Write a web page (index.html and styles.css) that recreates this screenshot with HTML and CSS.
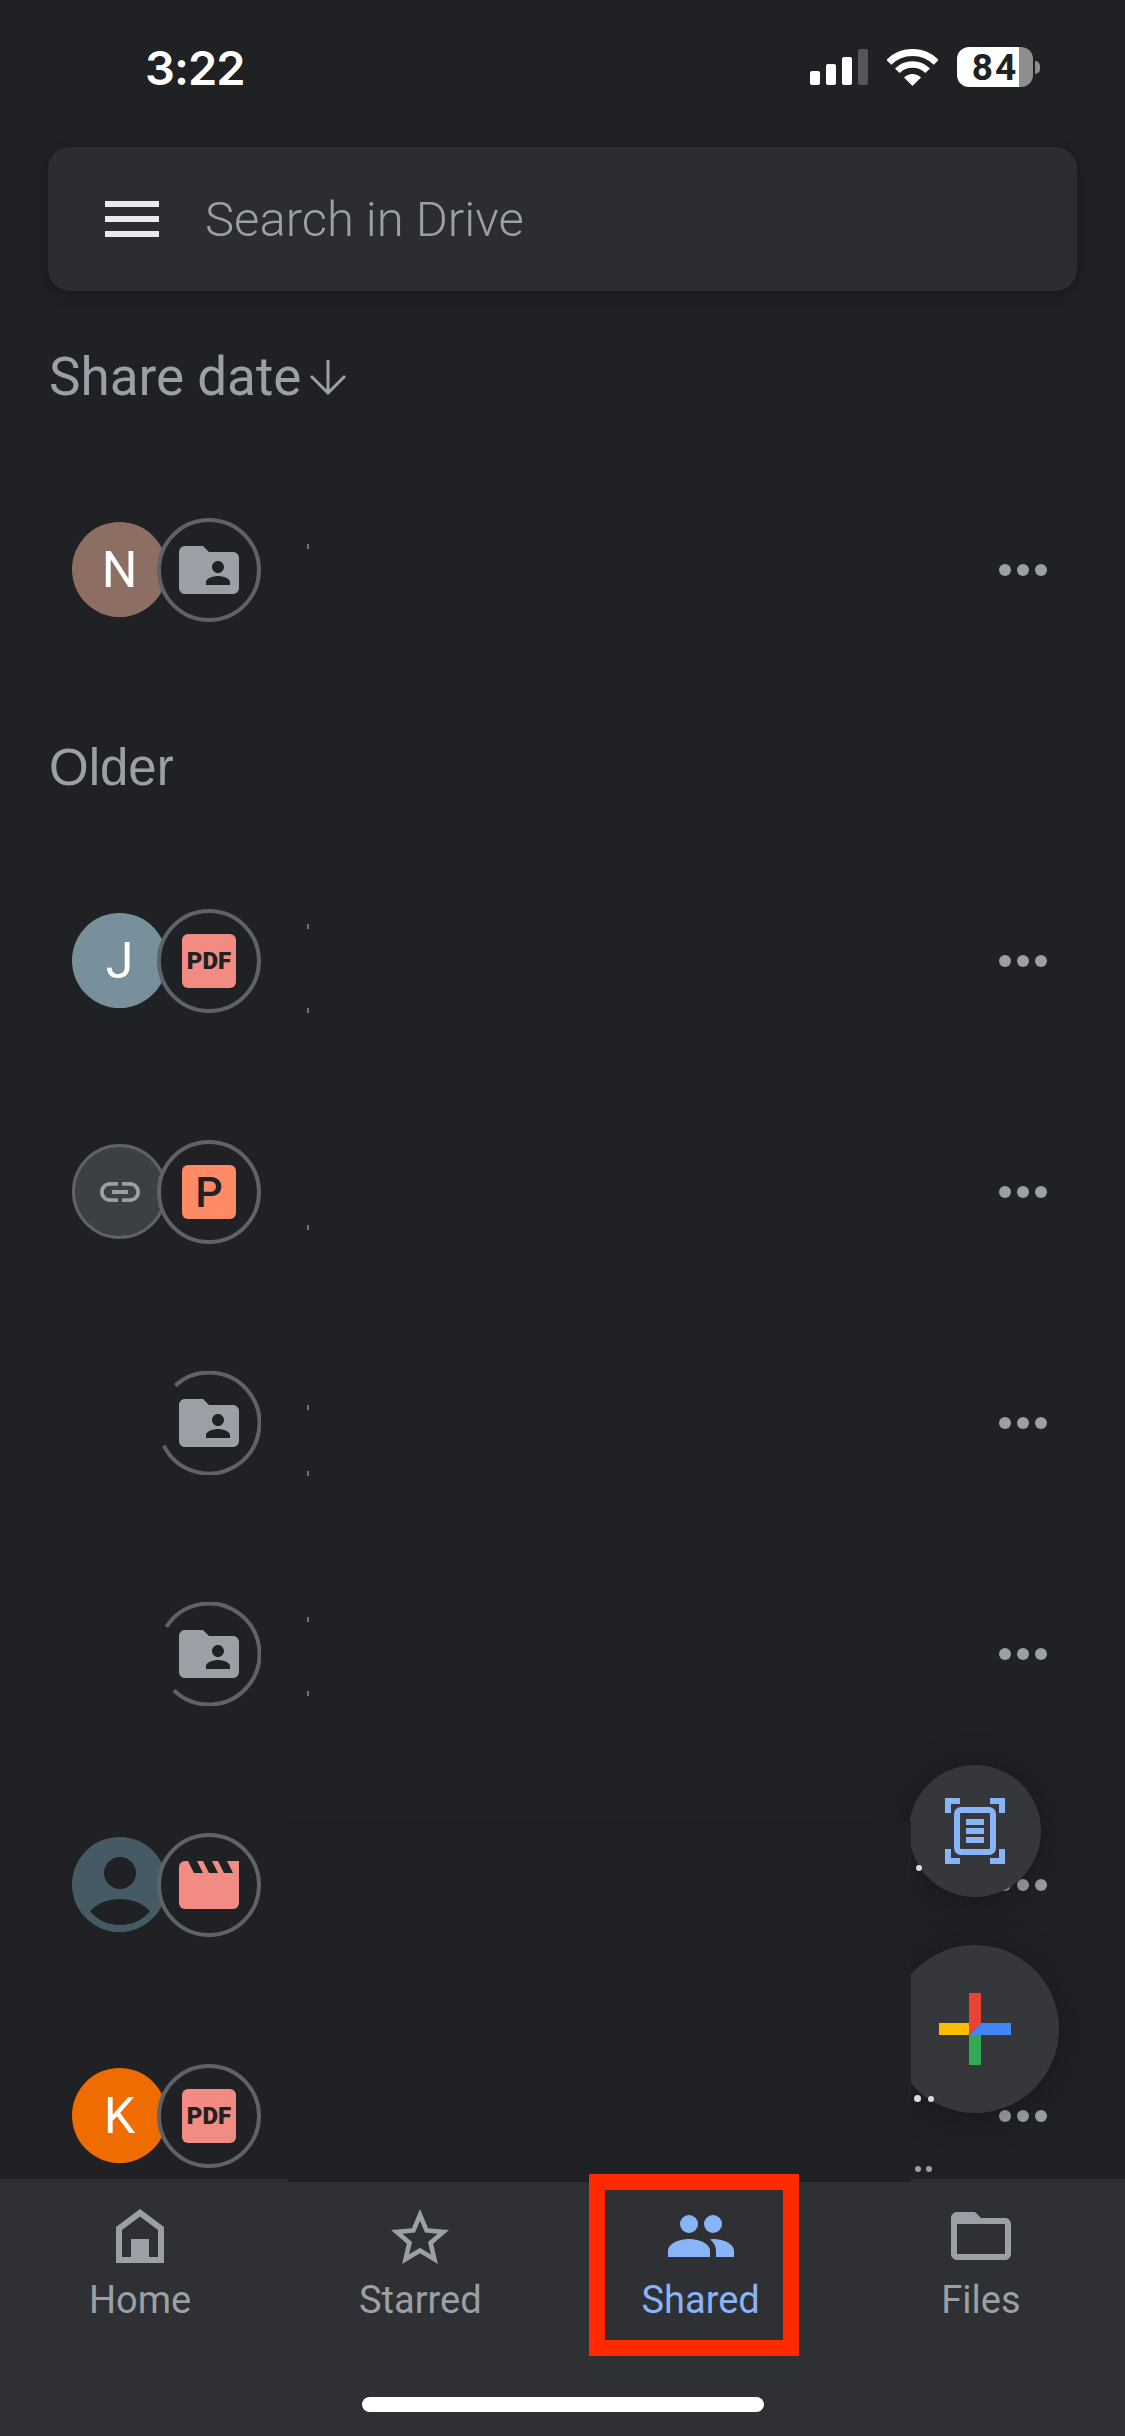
FILE: index.html
```html
<!DOCTYPE html>
<html lang="en">
<head>
	<meta charset="utf-8">
	<title>Drive - Shared</title>
	<link rel="stylesheet" href="styles.css">
</head>
<body>
<div class="app">

	<header class="statusbar">
		<span class="time">3:22</span>
		<div class="status-icons">
			<div class="signal"><i class="b1"></i><i class="b2"></i><i class="b3"></i><i class="b4"></i></div>
			<svg class="wifi" width="51" height="37" viewBox="0 0 51 37">
				<path d="M1.8 13.3A33.5 33.5 0 0 1 49.2 13.3" fill="none" stroke="#fff" stroke-width="7"/>
				<path d="M10.3 21.8A21.5 21.5 0 0 1 40.7 21.8" fill="none" stroke="#fff" stroke-width="6.5"/>
				<path d="M25.5 37L17 28.5A12 12 0 0 1 34 28.5z" fill="#fff"/>
			</svg>
			<div class="battery">84</div>
			<div class="battery-tip"></div>
		</div>
	</header>

	<div class="searchbar">
		<div class="burger"><i></i><i></i><i></i></div>
		<span class="search-text">Search in Drive</span>
	</div>

	<main class="list">
		<div class="sort-label">Share date<svg width="38" height="36" viewBox="0 0 38 36"><path d="M19 1v32M2 17l17 17 17-17" fill="none" stroke="#9aa0a6" stroke-width="3"/></svg></div>

		<div class="row">
			<div class="thumbs">
				<div class="avatar av-n">N</div>
				<div class="ring">
					<svg width="60" height="48" viewBox="2 4 20 16"><path fill="#9aa0a6" d="M20 6h-8l-2-2H4c-1.1 0-2 .9-2 2v12c0 1.1.9 2 2 2h16c1.1 0 2-.9 2-2V8c0-1.1-.9-2-2-2zm-5 3c1.1 0 2 .9 2 2s-.9 2-2 2-2-.9-2-2 .9-2 2-2zm4 8h-8v-1c0-1.33 2.67-2 4-2s4 .67 4 2v1z"/></svg>
				</div>
			</div>
			<i class="sliver s-a"></i>
			<div class="more"><i></i><i></i><i></i></div>
		</div>

		<div class="section-label">Older</div>

		<div class="row">
			<div class="thumbs">
				<div class="avatar av-j">J</div>
				<div class="ring"><div class="filetile pdf">PDF</div></div>
			</div>
			<i class="sliver s-b"></i><i class="sliver s-c"></i>
			<div class="more"><i></i><i></i><i></i></div>
		</div>

		<div class="row">
			<div class="thumbs">
				<div class="avatar av-link">
					<svg width="48" height="48" viewBox="0 0 24 24"><path fill="#9aa0a6" d="M3.9 12c0-1.71 1.39-3.1 3.1-3.1h4V7H7c-2.76 0-5 2.24-5 5s2.24 5 5 5h4v-1.9H7c-1.71 0-3.1-1.39-3.1-3.1zM8 13h8v-2H8v2zm9-6h-4v1.9h4c1.71 0 3.1 1.39 3.1 3.1s-1.39 3.1-3.1 3.1h-4V17h4c2.76 0 5-2.24 5-5s-2.24-5-5-5z"/></svg>
				</div>
				<div class="ring"><div class="filetile ppt">P</div></div>
			</div>
			<i class="sliver s-d"></i>
			<div class="more"><i></i><i></i><i></i></div>
		</div>

		<div class="row">
			<div class="thumbs">
				<div class="avatar-gap"></div>
				<div class="ring ring-open">
					<svg class="arc" width="104" height="104" viewBox="0 0 104 104"><path d="M18.3 14.4A50.5 50.5 0 1 1 6.8 74.6" fill="none" stroke="#5f6368" stroke-width="4"/></svg>
					<svg width="60" height="48" viewBox="2 4 20 16"><path fill="#9aa0a6" d="M20 6h-8l-2-2H4c-1.1 0-2 .9-2 2v12c0 1.1.9 2 2 2h16c1.1 0 2-.9 2-2V8c0-1.1-.9-2-2-2zm-5 3c1.1 0 2 .9 2 2s-.9 2-2 2-2-.9-2-2 .9-2 2-2zm4 8h-8v-1c0-1.33 2.67-2 4-2s4 .67 4 2v1z"/></svg>
				</div>
			</div>
			<i class="sliver s-e"></i><i class="sliver s-f"></i>
			<div class="more"><i></i><i></i><i></i></div>
		</div>

		<div class="row">
			<div class="thumbs">
				<div class="avatar-gap"></div>
				<div class="ring ring-open">
					<svg class="arc" width="104" height="104" viewBox="0 0 104 104"><path d="M9.4 24.9A50.5 50.5 0 1 1 16.8 88.2" fill="none" stroke="#5f6368" stroke-width="4"/></svg>
					<svg width="60" height="48" viewBox="2 4 20 16"><path fill="#9aa0a6" d="M20 6h-8l-2-2H4c-1.1 0-2 .9-2 2v12c0 1.1.9 2 2 2h16c1.1 0 2-.9 2-2V8c0-1.1-.9-2-2-2zm-5 3c1.1 0 2 .9 2 2s-.9 2-2 2-2-.9-2-2 .9-2 2-2zm4 8h-8v-1c0-1.33 2.67-2 4-2s4 .67 4 2v1z"/></svg>
				</div>
			</div>
			<i class="sliver s-b"></i><i class="sliver s-g"></i>
			<div class="more"><i></i><i></i><i></i></div>
		</div>

		<div class="row">
			<div class="thumbs">
				<div class="avatar av-photo">
					<svg width="95" height="95" viewBox="0 0 95 95"><circle cx="48" cy="36" r="16" fill="#202124"/><path fill="#202124" d="M18 74c8-8 18-12 30-12s22 4 30 12c-7 9-18 14-30 14s-23-5-30-14z"/></svg>
				</div>
				<div class="ring">
					<svg width="60" height="48" viewBox="0 0 60 48">
						<path fill="#f28b82" d="M0 6a6 6 0 0 1 6-6h54v42a6 6 0 0 1-6 6H6a6 6 0 0 1-6-6z"/>
						<path fill="#202124" d="M9 0h9l6 12h-9zM24 0h9l6 12h-9zM39 0h9l6 12h-9z"/>
					</svg>
				</div>
			</div>
			<div class="more"><i></i><i></i><i></i></div>
		</div>

		<div class="row">
			<div class="thumbs">
				<div class="avatar av-k">K</div>
				<div class="ring"><div class="filetile pdf">PDF</div></div>
			</div>
			<div class="more"><i></i><i></i><i></i></div>
		</div>
	</main>

	<nav class="tabbar">
		<div class="tabs">
			<div class="tab">
				<div class="tab-icon"><svg width="48" height="54" viewBox="0 0 48 54"><path fill="#9aa0a6" fill-rule="evenodd" d="M0 54V18L24 0l24 18v36zM6 48h9V30h18v18h9V21L24 7.5 6 21z"/></svg></div>
				<span class="tab-label">Home</span>
			</div>
			<div class="tab">
				<div class="tab-icon"><svg width="58" height="55" viewBox="2 2 20 19"><path fill="#9aa0a6" d="M22 9.24l-7.19-.62L12 2 9.19 8.63 2 9.24l5.46 4.73L5.82 21 12 17.27 18.18 21l-1.63-7.03L22 9.24zM12 15.4l-3.76 2.27 1-4.28-3.32-2.88 4.38-.38L12 6.1l1.71 4.04 4.38.38-3.32 2.88 1 4.28L12 15.4z"/></svg></div>
				<span class="tab-label">Starred</span>
			</div>
			<div class="tab tab-on">
				<div class="tab-icon"><svg width="66" height="42" viewBox="0 0 66 42"><g fill="#8ab4f8"><circle cx="21" cy="9" r="9"/><circle cx="45" cy="9" r="9"/><path d="M0 42v-6c0-8 12-12 21-12s21 4 21 12v6z"/><path d="M48 42v-6c0-5-2.5-9-6-11.5 1-.3 2-.5 3-.5 9 0 21 4 21 12v6z"/></g></svg></div>
				<span class="tab-label">Shared</span>
			</div>
			<div class="tab">
				<div class="tab-icon"><svg width="60" height="48" viewBox="2 4 20 16"><path fill="#9aa0a6" d="M20 6h-8l-2-2H4c-1.1 0-2 .9-2 2v12c0 1.1.9 2 2 2h16c1.1 0 2-.9 2-2V8c0-1.1-.9-2-2-2zm0 12H4V8h16v10z"/></svg></div>
				<span class="tab-label">Files</span>
			</div>
		</div>
		<div class="home-indicator"></div>
	</nav>

	<!-- floating buttons -->
	<div class="fab fab-scan">
		<svg width="60" height="66" viewBox="0 0 60 66" fill="none" stroke="#8ab4f8" stroke-width="6">
			<path d="M3 15V3h12M45 3h12v12M3 51v12h12M45 63h12V51"/>
			<rect x="12" y="12" width="36" height="42" rx="4"/>
			<path d="M21 24h18M21 33h18M21 42h18"/>
		</svg>
	</div>
	<div class="fab fab-new">
		<svg width="72" height="72" viewBox="0 0 72 72">
			<path fill="#ea4335" d="M30 0h12v30L30 42z"/>
			<path fill="#4285f4" d="M42 30h30v12H30z"/>
			<path fill="#34a853" d="M30 42h12v30H30z"/>
			<path fill="#fbbc04" d="M0 30h30v12H0z"/>
		</svg>
	</div>

	<!-- the darker block left over the list and the specks beside it -->
	<div class="blank"></div>
	<i class="speck sp1"></i><i class="speck sp2"></i><i class="speck sp3"></i><i class="speck sp4"></i><i class="speck sp5"></i>

	<!-- red annotation box -->
	<div class="callout"></div>
</div>
</body>
</html>
```

FILE: styles.css
```css
* { box-sizing: border-box; }

body {
	margin: 0;
	background: #202124;
	font-family: Roboto, "Liberation Sans", sans-serif;
}

.app {
	position: relative;
	display: flex;
	flex-direction: column;
	width: 1125px;
	height: 2436px;
	overflow: hidden;
	background: #202124;
}

/* status bar */
.statusbar {
	flex: none;
	display: flex;
	justify-content: space-between;
	align-items: center;
	height: 147px;
	padding: 0 85px 13px 145px;
}
.time {
	font-family: Inter, sans-serif;
	font-size: 47px;
	font-weight: 600;
	letter-spacing: -1px;
	color: #fff;
}
.status-icons {
	display: flex;
	align-items: center;
	gap: 19px;
}
.signal {
	display: flex;
	align-items: flex-end;
	gap: 6px;
	height: 36px;
}
.signal i {
	display: block;
	width: 10px;
	border-radius: 2px;
	background: #fff;
}
.signal .b1 { height: 14px; }
.signal .b2 { height: 21px; }
.signal .b3 { height: 28px; }
.signal .b4 { height: 36px; background: #55565a; }
.battery {
	display: flex;
	align-items: center;
	justify-content: center;
	width: 76px;
	height: 40px;
	border-radius: 12px;
	background: linear-gradient(90deg, #fff 62px, #8e8e8e 62px);
	font-size: 37px;
	font-weight: 700;
	letter-spacing: 2px;
	color: #202124;
}
.battery-tip {
	width: 5px;
	height: 13px;
	margin-left: -17px;
	border-radius: 0 7px 7px 0;
	background: #8e8e8e;
}

/* search */
.searchbar {
	flex: none;
	display: flex;
	align-items: center;
	gap: 46px;
	height: 144px;
	margin: 0 48px;
	padding-left: 57px;
	border-radius: 22px;
	background: #2c2d31;
	box-shadow: 0 4px 14px rgba(0, 0, 0, .25);
}
.burger {
	display: flex;
	flex-direction: column;
	gap: 9px;
	width: 54px;
}
.burger i {
	display: block;
	height: 6px;
	background: #e8eaed;
}
.search-text {
	font-size: 49px;
	font-weight: 300;
	color: #9aa0a6;
}

/* list */
.list {
	flex: 1;
	min-height: 0;
	overflow: hidden;
}
.sort-label {
	display: flex;
	align-items: center;
	gap: 8px;
	height: 163px;
	padding: 8px 0 0 49px;
	font-size: 53px;
	color: #9aa0a6;
}
.section-label {
	display: flex;
	align-items: center;
	height: 160px;
	padding: 4px 0 0 49px;
	font-family: "Liberation Sans", sans-serif;
	font-size: 51px;
	color: #9aa0a6;
}
.row {
	position: relative;
	display: flex;
	align-items: center;
	justify-content: space-between;
	height: 231px;
	padding: 0 78px 0 72px;
}
.thumbs {
	display: flex;
	align-items: center;
}
.avatar, .avatar-gap {
	flex: none;
	width: 95px;
	height: 95px;
}
.avatar {
	display: flex;
	align-items: center;
	justify-content: center;
	border-radius: 50%;
	font-size: 50px;
	color: #fff;
}
.av-n { background: #8d6e63; }
.av-j { background: #78909c; }
.av-k { background: #ef6c00; }
.av-photo { background: #455a64; }
.av-link {
	background: #3c4043;
	border: 3px solid #5f6368;
}
.ring {
	position: relative;
	flex: none;
	display: flex;
	align-items: center;
	justify-content: center;
	width: 104px;
	height: 104px;
	margin-left: -10px;
	border: 4px solid #5f6368;
	border-radius: 50%;
	background: #202124;
}
.ring-open { border: none; background: none; }
.arc {
	position: absolute;
	top: 0;
	left: 0;
}
.filetile {
	display: flex;
	align-items: center;
	justify-content: center;
	width: 54px;
	height: 54px;
	border-radius: 6px;
	color: #202124;
}
.pdf {
	background: #f28b82;
	font-size: 24px;
	font-weight: 900;
}
.ppt {
	background: #ff8a65;
	font-size: 43px;
	font-weight: 500;
}
.more {
	display: flex;
	gap: 6px;
}
.more i {
	display: block;
	width: 12px;
	height: 12px;
	border-radius: 50%;
	background: #9aa0a6;
}

/* what is left of the cut out titles */
.sliver {
	position: absolute;
	left: 307px;
	width: 2px;
	height: 5px;
	background: #6f7276;
}
.s-a { top: 90px; }
.s-b { top: 79px; }
.s-c { top: 163px; }
.s-d { top: 149px; }
.s-e { top: 98px; }
.s-f { top: 164px; }
.s-g { top: 153px; }

/* bottom tabs */
.tabbar {
	flex: none;
	height: 257px;
	background: #2f3034;
}
.tabs {
	display: grid;
	grid-template-columns: repeat(4, 1fr);
	padding: 28px 4px 0 0;
}
.tab {
	display: flex;
	flex-direction: column;
	align-items: center;
}
.tab-icon {
	display: flex;
	align-items: center;
	justify-content: center;
	height: 58px;
}
.tab-label {
	margin-top: 15px;
	font-size: 38px;
	line-height: 40px;
	color: #9aa0a6;
}
.tab-on .tab-label { color: #8ab4f8; }
.home-indicator {
	width: 402px;
	height: 15px;
	margin: 77px auto 0;
	border-radius: 8px;
	background: #fff;
}

/* overlays */
.fab {
	position: absolute;
	display: flex;
	align-items: center;
	justify-content: center;
	border-radius: 50%;
	background: #36373b;
	box-shadow: 0 4px 36px rgba(0, 0, 0, .3);
}
.fab-scan {
	top: 1765px;
	left: 909px;
	width: 132px;
	height: 132px;
}
.fab-new {
	top: 1945px;
	left: 891px;
	width: 168px;
	height: 168px;
}
.blank {
	position: absolute;
	top: 1821px;
	left: 288px;
	width: 623px;
	height: 361px;
	background: #1f2023;
}
.speck {
	position: absolute;
	width: 6px;
	height: 6px;
	border-radius: 50%;
	background: #dcdde0;
}
.sp1 { top: 1865px; left: 916px; }
.sp2 { top: 2095px; left: 914px; width: 7px; height: 7px; }
.sp3 { top: 2096px; left: 928px; }
.sp4 { top: 2166px; left: 915px; background: #9aa0a6; }
.sp5 { top: 2166px; left: 926px; background: #9aa0a6; }
.callout {
	position: absolute;
	top: 2174px;
	left: 589px;
	width: 210px;
	height: 182px;
	border: 16px solid #ff2a00;
}
```
